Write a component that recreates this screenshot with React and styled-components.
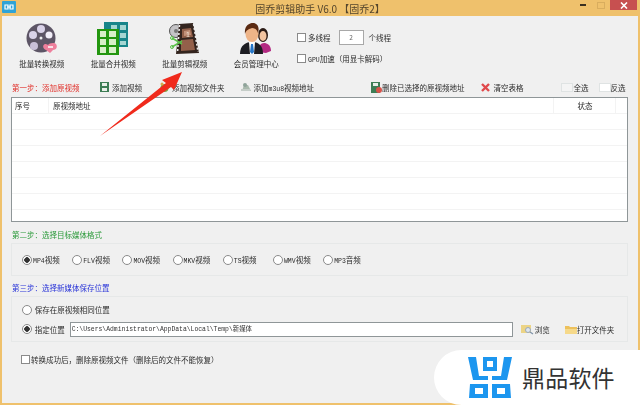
import styled, { createGlobalStyle } from "styled-components"

const Global = createGlobalStyle`
  html, body { margin: 0; padding: 0; background: #f0f0f0; }
  body { font-family: "Noto Sans CJK SC", "Liberation Sans", sans-serif; overflow: hidden; }
`

const Window = styled.div`
  position: relative;
  width: 640px;
  height: 405px;
  background: #efc16c;
  padding: 0 2px 2px 2px;
  box-sizing: border-box;
  display: flex;
  flex-direction: column;
  overflow: hidden;
`

const TitleBar = styled.div`
  height: 16px;
  flex: none;
  display: flex;
  align-items: center;
  justify-content: center;
  font-size: 10px;
  color: #54452c;
  white-space: pre;
  filter: blur(0.3px);
`

const AppIcon = styled.svg`
  position: absolute;
  left: 2px;
  top: 1px;
`

const Controls = styled.div`
  position: absolute;
  top: 0;
  right: 3px;
  display: flex;
  align-items: flex-start;
`

const Control = styled.div`
  width: ${(props) => props.$w}px;
  height: 10px;
  display: flex;
  align-items: center;
  justify-content: center;
  background: ${(props) => props.$bg || "transparent"};
`

const Body = styled.div`
  flex: 1;
  background: #f0f0f0;
  padding: 0 10px 0 9px;
  display: flex;
  flex-direction: column;
  min-height: 0;
  filter: blur(0.3px);
`

const Toolbar = styled.div`
  height: 64px;
  flex: none;
  display: flex;
  margin-left: -5px;
`

const ToolButton = styled.div`
  width: 71.5px;
  display: flex;
  flex-direction: column;
  align-items: center;
  padding-top: 6px;
  font-size: 7.5px;
  line-height: 12px;
  color: #2c2c2c;
  white-space: nowrap;
  svg { height: 33px; margin-bottom: 3px; }
`

const Options = styled.div`
  margin-left: 5px;
  padding-top: 14px;
  display: flex;
  flex-direction: column;
  gap: 6px;
  font-size: 7.5px;
  color: #2c2c2c;
`

const OptionRow = styled.div`
  display: flex;
  align-items: center;
  height: 15px;
  gap: 2px;
  white-space: nowrap;
`

const Check = styled.span`
  width: 7px;
  height: 7px;
  flex: none;
  border: 1px solid #8a8a8a;
  background: #fff;
`

const ThreadInput = styled.span`
  width: 23px;
  height: 13px;
  margin: 0 3px 0 6px;
  border: 1px solid #a8a8a8;
  background: #fff;
  font-size: 6.5px;
  line-height: 13px;
  text-align: center;
  color: #666;
`

const Latin = styled.span`
  font-family: "Liberation Mono", monospace;
  font-size: 6.5px;
`

const StepRow = styled.div`
  height: 17px;
  flex: none;
  margin-top: ${(props) => props.$top || 0}px;
  padding-bottom: ${(props) => props.$bottom || 0}px;
  box-sizing: border-box;
  display: flex;
  align-items: center;
  font-size: 7.5px;
  color: #2c2c2c;
  white-space: nowrap;
`

const StepTitle = styled.span`
  flex: none;
  color: ${(props) => props.$color};
  font-size: 7.5px;
  width: ${(props) => props.$width || "auto"};
  padding-left: 1px;
  box-sizing: border-box;
`

const Action = styled.span`
  flex: none;
  display: flex;
  align-items: center;
  gap: ${(props) => (props.$inner === undefined ? 3 : props.$inner)}px;
  margin-left: ${(props) => props.$gap}px;
`

const Table = styled.div`
  height: 125px;
  flex: none;
  border: 1px solid #8f9698;
  background: #fff;
  box-sizing: border-box;
  background-image: repeating-linear-gradient(to bottom, transparent 0, transparent 15px, #f3f3f3 15px, #f3f3f3 16px);
`

const HeadRow = styled.div`
  display: grid;
  grid-template-columns: 37px 505px 62px 1fr;
  height: 16px;
  font-size: 7.5px;
  line-height: 15px;
  color: #2c2c2c;
`

const HeadCell = styled.span`
  padding-left: ${(props) => props.$pad || 3}px;
  border-right: ${(props) => (props.$plain ? "none" : "1px solid #f3f3f3")};
  text-align: ${(props) => props.$align || "left"};
`

const Group = styled.div`
  flex: none;
  height: ${(props) => props.$height}px;
  border: 1px solid #e6e8e8;
  box-sizing: border-box;
  display: flex;
  flex-direction: column;
  justify-content: center;
`

const FormatRow = styled.div`
  display: grid;
  grid-template-columns: repeat(7, 50.2px);
  padding-left: 10px;
  font-size: 7.5px;
  color: #2c2c2c;
`

const Radio = styled.label`
  display: flex;
  align-items: center;
  gap: 1px;
  white-space: nowrap;
`

const Dot = styled.span`
  width: 8px;
  height: 8px;
  flex: none;
  border: 1px solid #8a8a8a;
  border-radius: 50%;
  background: ${(props) => (props.$on ? "radial-gradient(circle, #333 0, #333 2.5px, #fff 3px)" : "#fff")};
`

const PathRow = styled.div`
  height: ${(props) => props.$height}px;
  display: flex;
  align-items: center;
  padding-left: 10px;
  font-size: 7.5px;
  color: #2c2c2c;
  white-space: nowrap;
`

const PathInput = styled.div`
  width: 443px;
  height: 15px;
  flex: none;
  margin-left: 5px;
  box-sizing: border-box;
  border: 1px solid #8f9698;
  background: #fff;
  padding-left: 1px;
  font-family: "Liberation Mono", "Noto Sans CJK SC", monospace;
  font-size: 6.4px;
  line-height: 13px;
  color: #333;
`

const Footer = styled.div`
  margin-top: 12px;
  padding-left: 10px;
  display: flex;
  align-items: center;
  gap: 1px;
  font-size: 7.5px;
  color: #2c2c2c;
  white-space: nowrap;
`

const ArrowLayer = styled.svg`
  position: absolute;
  left: 0;
  top: 0;
  pointer-events: none;
`

const Badge = styled.div`
  position: absolute;
  right: 0;
  bottom: 0;
  width: 206px;
  height: 55px;
  background: #fff;
  border-radius: 28px 0 0 28px;
  display: flex;
  align-items: center;
  padding-left: 34px;
  box-sizing: border-box;
  gap: 10px;
`

const BadgeText = styled.span`
  font-size: 23px;
  color: #333;
  letter-spacing: 0.2px;
  line-height: 1;
`

const ReelIcon = () => (
  <svg width="32" height="33" viewBox="0 0 32 33">
    <circle cx="15" cy="16" r="14.500" fill="#5d5566" />
    <circle cx="15" cy="7" r="4" fill="#d9d2e8" />
    <circle cx="7" cy="13" r="4" fill="#d9d2e8" />
    <circle cx="23" cy="13" r="3.500" fill="#f2eef8" />
    <circle cx="8" cy="24" r="4" fill="#c9bfd8" />
    <circle cx="15" cy="16" r="1.500" fill="#eee" />
    <path d="M20 28c-3-1-4-5-1-6 1 0 2 0 3 1 1-2 6-3 8-1 2 3 0 6-3 6l-3 3z" fill="#ee7f9c" />
    <path d="M22 25h5" stroke="#fff" strokeWidth="1.500" />
  </svg>
)

const TablesIcon = () => (
  <svg width="32" height="33" viewBox="0 0 32 33">
    <rect x="7" y="0" width="24" height="25" fill="#17858a" />
    <path d="M14 3h6v5h-6zM23 3h6v5h-6zM23 11h6v5h-6zM23 19h6v4h-6z" fill="#a5d6d2" />
    <rect x="0" y="7" width="22" height="26" fill="#23960f" />
    <path d="M3 9h6v6H3zM12 9h7v6h-7zM3 17h6v6H3zM12 17h7v6h-7zM3 25h6v6H3zM12 25h7v6h-7z" fill="#d8efc8" />
  </svg>
)

const FilmIcon = () => (
  <svg width="32" height="33" viewBox="0 0 32 33">
    <circle cx="7" cy="9" r="6.500" fill="#c4c3c6" stroke="#555" strokeWidth="1" />
    <circle cx="7" cy="9" r="2" fill="#777" />
    <path d="M10 2L24 1L30 31L7 32z" fill="#33241e" />
    <path d="M13 7l9-1 2 9-11 1zM12 18l12-1 2 11-14 1z" fill="#93604a" />
    <path d="M15 9l6-1 1 5-7 1z" fill="#c29078" />
    <text x="17" y="15" fontSize="7" fill="#f2e6d8" fontFamily="Liberation Sans">1</text>
    <path d="M10.500 3L8.500 31" stroke="#eee" strokeWidth="1.500" strokeDasharray="2 2" />
    <path d="M24.500 2L29 30" stroke="#eee" strokeWidth="1.500" strokeDasharray="2 2" />
    <path d="M3 16l10 6M3 25l10-6" stroke="#5bc24a" strokeWidth="1.500" />
    <circle cx="3" cy="16" r="1.500" fill="none" stroke="#5bc24a" />
    <circle cx="3" cy="25" r="1.500" fill="none" stroke="#5bc24a" />
  </svg>
)

const PeopleIcon = () => (
  <svg width="32" height="33" viewBox="0 0 32 33">
    <path d="M18 30c0-6 3-9 6-9s7 2 7 8l-5 2z" fill="#b32a82" />
    <ellipse cx="23" cy="13" rx="5" ry="7" fill="#2a1a14" />
    <ellipse cx="23" cy="14" rx="3.500" ry="5" fill="#f2c4a0" />
    <path d="M0 32c0-9 6-12 12-12s11 3 11 12z" fill="#1d1d22" />
    <path d="M9 20h6l-1 12h-4z" fill="#fff" />
    <path d="M11 22h2l1 8-2 2-2-2z" fill="#2576c8" />
    <ellipse cx="12" cy="12" rx="6.500" ry="8" fill="#eeb488" />
    <path d="M5 12c-1-8 4-11 8-11s7 4 5 10c-1-3-3-5-6-5-3 1-6 2-7 6z" fill="#5a2a12" />
  </svg>
)

const SmallFilm = () => (
  <svg width="9" height="10" viewBox="0 0 9 10">
    <rect width="9" height="10" fill="#3d7d55" />
    <rect x="2" y="1" width="5" height="3" fill="#e8efe8" />
    <rect x="2" y="6" width="5" height="3" fill="#e8efe8" />
  </svg>
)

const SmallFolderAdd = () => (
  <svg width="9" height="10" viewBox="0 0 9 10">
    <circle cx="4.500" cy="6" r="3.200" fill="none" stroke="#7ba644" strokeWidth="1.600" />
    <circle cx="2" cy="2" r="1.500" fill="#d9a94a" />
  </svg>
)

const SmallDisk = () => (
  <svg width="11" height="10" viewBox="0 0 11 10">
    <path d="M2 9l2-6h4l3 6z" fill="#a9b9ad" />
    <circle cx="5" cy="3" r="2" fill="#8fa39a" />
    <rect x="1" y="7" width="9" height="2" fill="#c5cdc8" />
  </svg>
)

const SmallDelete = () => (
  <svg width="11" height="11" viewBox="0 0 11 11">
    <rect width="9" height="11" fill="#3d7d55" />
    <rect x="2" y="1" width="5" height="3" fill="#e8efe8" />
    <circle cx="8" cy="8" r="3" fill="#d9534a" />
  </svg>
)

const SmallCross = () => (
  <svg width="9" height="9" viewBox="0 0 9 9">
    <path d="M1 1l7 7M8 1l-7 7" stroke="#e0494c" strokeWidth="2.400" />
  </svg>
)

const SmallBox = ({ shade }) => (
  <svg width="12" height="9" viewBox="0 0 12 9">
    <rect x="0.500" y="0.500" width="11" height="8" fill={shade} stroke="#dfe3e3" />
  </svg>
)

const SmallSearch = () => (
  <svg width="13" height="11" viewBox="0 0 13 11">
    <path d="M0 1h10v8H0z" fill="#ecd486" />
    <circle cx="7" cy="6" r="2.500" fill="#dfe7f0" stroke="#9aa9bb" />
    <path d="M9 8l3 2" stroke="#8094aa" strokeWidth="1.400" />
  </svg>
)

const SmallFolder = () => (
  <svg width="12" height="9" viewBox="0 0 12 9">
    <path d="M0 1h4l1 1h7v7H0z" fill="#edc15c" />
    <path d="M0 4h12v5H0z" fill="#f6d98a" />
  </svg>
)

const Logo = () => (
  <svg width="44" height="41" viewBox="0 0 44 41">
    <g fill="#1c96ef" fillRule="evenodd">
      <path d="M0 0h8l3 19h9v4H5z" />
      <path d="M44 0h-8l-3 19h-9v4h15z" />
      <path d="M15 0h14v14H15zM19 4v6h6V4z" />
      <path d="M2 27h18v14H1zM7 31v6h8v-6z" />
      <path d="M24 27h18l1 14H24zM29 31v6h8v-6z" />
    </g>
  </svg>
)

const FORMATS = [["MP4", "视频"], ["FLV", "视频"], ["MOV", "视频"], ["MKV", "视频"], ["TS", "视频"], ["WMV", "视频"], ["MP3", "音频"]]

const App = () => {
  return (
    <>
      <Global />
      <Window>
        <AppIcon width="14" height="12" viewBox="0 0 14 12">
          <rect width="14" height="12" rx="1" fill="#2fa3d6" />
          <path d="M3 4h3v4H3zM8 4h3v4H8zM5 6h4" fill="none" stroke="#fff" strokeWidth="1.200" />
        </AppIcon>
        <TitleBar>固乔剪辑助手 V6.0 【固乔2】</TitleBar>
        <Controls>
          <Control $w={18}>
            <svg width="6" height="2" viewBox="0 0 6 2"><rect width="6" height="2" fill="#3a3020" /></svg>
          </Control>
          <Control $w={18}>
            <svg width="8" height="7" viewBox="0 0 8 7"><rect x="0.500" y="0.500" width="7" height="6" fill="none" stroke="#d9ad5e" /></svg>
          </Control>
          <Control $w={27} $bg="#c75050">
            <svg width="8" height="7" viewBox="0 0 8 7"><path d="M1 0.500l6 6M7 0.500l-6 6" stroke="#fff" strokeWidth="1.600" /></svg>
          </Control>
        </Controls>
        <Body>
          <Toolbar>
            <ToolButton><ReelIcon />批量转换视频</ToolButton>
            <ToolButton><TablesIcon />批量合并视频</ToolButton>
            <ToolButton><FilmIcon />批量剪辑视频</ToolButton>
            <ToolButton><PeopleIcon />会员管理中心</ToolButton>
            <Options>
              <OptionRow>
                <Check />多线程<ThreadInput>2</ThreadInput>个线程
              </OptionRow>
              <OptionRow>
                <Check /><span><Latin>GPU</Latin>加速（用显卡解码）</span>
              </OptionRow>
            </Options>
          </Toolbar>
          <StepRow $bottom={3}>
            <StepTitle $color="#e0302a" $width="88px">第一步：添加原视频</StepTitle>
            <Action $gap={1}><SmallFilm />添加视频</Action>
            <Action $gap={18}><SmallFolderAdd />添加视频文件夹</Action>
            <Action $gap={15}><SmallDisk /><span>添加<Latin>m3u8</Latin>视频地址</span></Action>
            <Action $gap={57} $inner={0}><SmallDelete />删除已选择的原视频地址</Action>
            <Action $gap={16} $inner={4}><SmallCross />清空表格</Action>
            <Action $gap={37} $inner={1}><SmallBox shade="#f4f4f4" />全选</Action>
            <Action $gap={10} $inner={0}><SmallBox shade="#fff" />反选</Action>
          </StepRow>
          <Table>
            <HeadRow>
              <HeadCell>序号</HeadCell>
              <HeadCell $pad={4}>原视频地址</HeadCell>
              <HeadCell $align="center" $pad={1}>状态</HeadCell>
              <HeadCell $plain />
            </HeadRow>
          </Table>
          <StepRow $top={4}>
            <StepTitle $color="#2b9a3a">第二步：选择目标媒体格式</StepTitle>
          </StepRow>
          <Group $height={33}>
            <FormatRow>
              {FORMATS.map(([code, kind], i) => (
                <Radio key={code}><Dot $on={i === 0} /><span><Latin>{code}</Latin>{kind}</span></Radio>
              ))}
            </FormatRow>
          </Group>
          <StepRow $top={3}>
            <StepTitle $color="#2a35d8">第三步：选择新媒体保存位置</StepTitle>
          </StepRow>
          <Group $height={46}>
            <PathRow $height={20}>
              <Radio><Dot />&nbsp;保存在原视频相同位置</Radio>
            </PathRow>
            <PathRow $height={19}>
              <Radio><Dot $on />&nbsp;指定位置</Radio>
              <PathInput>C:\Users\Administrator\AppData\Local\Temp\新媒体</PathInput>
              <Action $gap={8} $inner={1}><SmallSearch />浏览</Action>
              <Action $gap={15} $inner={0}><SmallFolder />打开文件夹</Action>
            </PathRow>
          </Group>
          <Footer>
            <Check />转换成功后，删除原视频文件（删除后的文件不能恢复）
          </Footer>
        </Body>
        <ArrowLayer width="640" height="405" viewBox="0 0 640 405">
          <path d="M100 136L166 83L162 80L182 72L174 90L171 87z" fill="#f02a1c" />
        </ArrowLayer>
        <Badge>
          <Logo />
          <BadgeText>鼎品软件</BadgeText>
        </Badge>
      </Window>
    </>
  )
}

export default App
